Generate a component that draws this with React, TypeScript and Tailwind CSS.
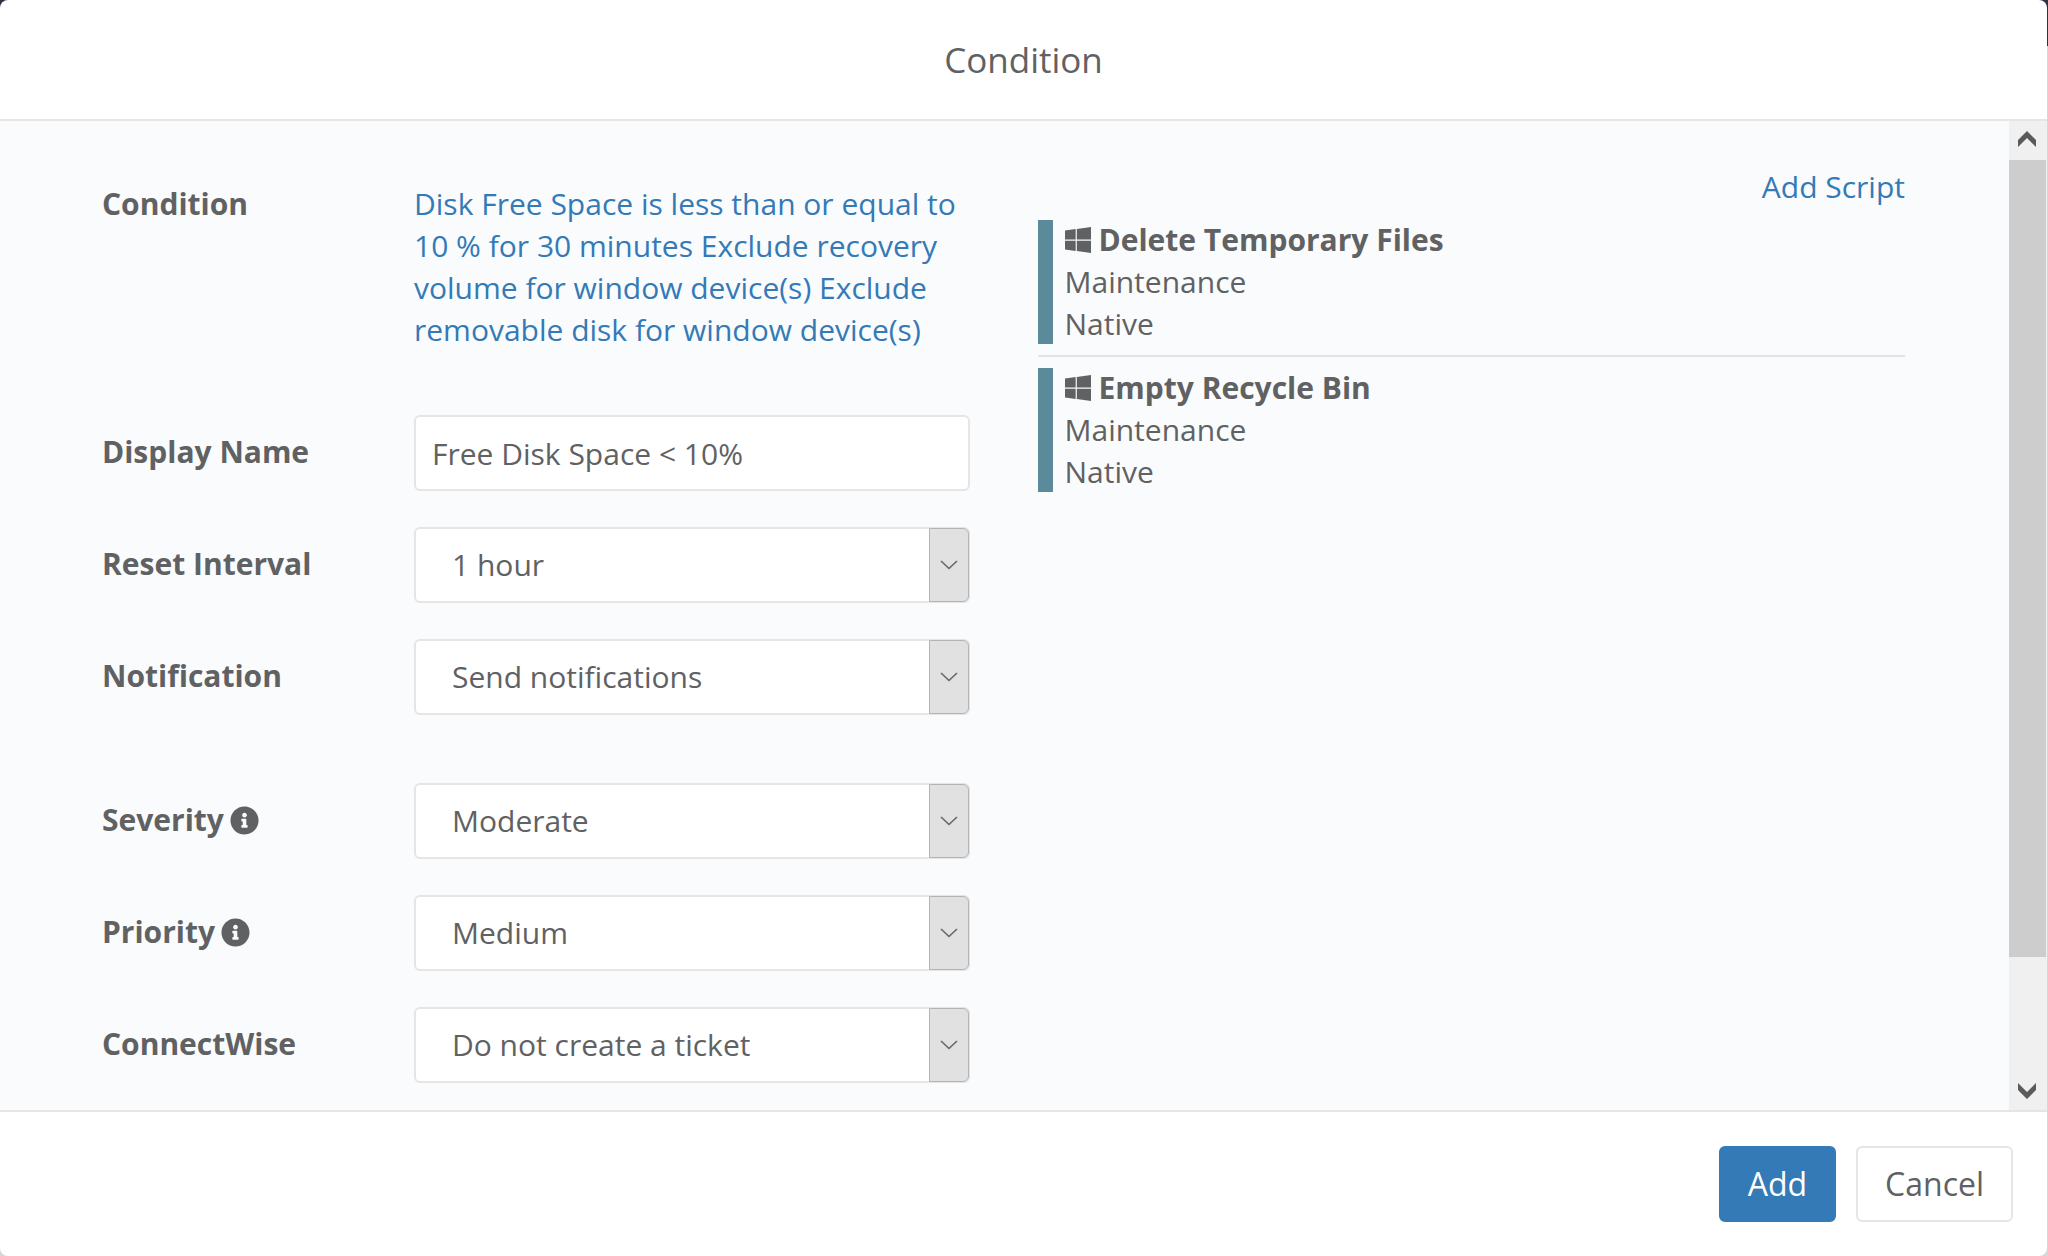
import { useState } from "react";
import { FaInfoCircle, FaWindows } from "react-icons/fa";

const scripts = [
    { name: "Delete Temporary Files", category: "Maintenance", type: "Native" },
    { name: "Empty Recycle Bin", category: "Maintenance", type: "Native" },
];

type SelectRowProps = {
    id: string;
    label: string;
    options: string[];
    info?: boolean;
};

function SelectRow({ id, label, options, info }: SelectRowProps) {
    const [value, setValue] = useState(options[0]);

    return (
        <div className="grid grid-cols-[312px_minmax(0,1fr)]">
            <label htmlFor={id} className="flex items-center gap-1.5 self-start pt-4 font-bold">
                {label}
                {info && <FaInfoCircle className="size-[29px]" />}
            </label>
            <div className="relative">
                <select
                    id={id}
                    value={value}
                    onChange={(e) => setValue(e.target.value)}
                    className="block h-[76px] w-full appearance-none rounded-md border-2 border-[#e5e5e5] bg-white pl-9 pr-12"
                >
                    {options.map((option) => (
                        <option key={option}>{option}</option>
                    ))}
                </select>
                <span className="pointer-events-none absolute inset-y-px right-px flex w-10 items-center justify-center rounded-r-md border border-[#b4b4b4] bg-[#e1e1e1]">
                    <svg viewBox="0 0 18 10" className="h-[10px] w-[18px]" fill="none" stroke="#666" strokeWidth="1.6">
                        <path d="M1 1l8 7.5L17 1" />
                    </svg>
                </span>
            </div>
        </div>
    );
}

function Scrollbar() {
    return (
        <div className="flex w-[38px] shrink-0 flex-col bg-[#f0f0f0]" aria-hidden="true">
            <div className="flex h-[39px] shrink-0 items-center justify-center pb-1 pr-0.5">
                <svg viewBox="0 0 18 16" className="h-4 w-[18px]" fill="#5b5b5b">
                    <path d="M9 0l9 9v7l-9-9-9 9V9z" />
                </svg>
            </div>
            <div className="flex flex-1 flex-col">
                <div className="mr-px h-[87.5%] bg-[#cdcdcd]" />
            </div>
            <div className="flex h-[39px] shrink-0 items-center justify-center pr-0.5">
                <svg viewBox="0 0 18 16" className="h-4 w-[18px]" fill="#5b5b5b">
                    <path d="M9 16L0 7V0l9 9 9-9v7z" />
                </svg>
            </div>
        </div>
    );
}

export default function App() {
    const [displayName, setDisplayName] = useState("Free Disk Space < 10%");

    return (
        <div className="h-screen bg-[linear-gradient(#2e3044_46px,#d6d7da_46px)] pr-px font-['Open_Sans','Noto_Sans',sans-serif] text-[30px] leading-[42px] text-[#606163]">
            <div role="dialog" aria-labelledby="modal-title" className="flex h-full flex-col overflow-hidden rounded-lg bg-white">
                <header className="border-b-2 border-[#e5e5e5] py-[38px] text-center">
                    <h1 id="modal-title" className="text-[35px] leading-[43px]">
                        Condition
                    </h1>
                </header>

                <div className="flex min-h-0 flex-1 bg-[#fafbfd]">
                    <div className="grid min-w-0 flex-1 grid-cols-2 gap-[68px] overflow-hidden pl-[102px] pr-[104px]">
                        <form className="pt-[62px]">
                            <div className="grid grid-cols-[312px_minmax(0,1fr)]">
                                <span className="font-bold">Condition</span>
                                <a href="#" className="text-[#337ab7]">
                                    Disk Free Space is less than or equal to 10 % for 30 minutes Exclude recovery volume for window device(s) Exclude
                                    removable disk for window device(s)
                                </a>
                            </div>
                            <div className="mt-16 flex flex-col gap-9">
                                <div className="grid grid-cols-[312px_minmax(0,1fr)]">
                                    <label htmlFor="display-name" className="self-start pt-4 font-bold">
                                        Display Name
                                    </label>
                                    <input
                                        id="display-name"
                                        type="text"
                                        value={displayName}
                                        onChange={(e) => setDisplayName(e.target.value)}
                                        className="h-[76px] w-full rounded-md border-2 border-[#e5e5e5] bg-white px-4"
                                    />
                                </div>
                                <SelectRow id="reset-interval" label="Reset Interval" options={["1 hour"]} />
                                <SelectRow id="notification" label="Notification" options={["Send notifications"]} />
                            </div>
                            <div className="mt-[68px] flex flex-col gap-9">
                                <SelectRow id="severity" label="Severity" options={["Moderate"]} info />
                                <SelectRow id="priority" label="Priority" options={["Medium"]} info />
                                <SelectRow id="connectwise" label="ConnectWise" options={["Do not create a ticket"]} />
                            </div>
                        </form>

                        <section className="pt-[45px]">
                            <div className="mb-[11px] text-right">
                                <a href="#" className="text-[#337ab7]">
                                    Add Script
                                </a>
                            </div>
                            <ul className="divide-y-2 divide-[#e2e5e8]">
                                {scripts.map((script) => (
                                    <li key={script.name} className="flex gap-3 py-[10px] first:pt-0">
                                        <div className="my-px w-[15px] shrink-0 bg-[#5b8a9b]" />
                                        <div>
                                            <h2 className="flex items-center gap-2 font-bold">
                                                <FaWindows className="h-[30px] w-[26px]" />
                                                {script.name}
                                            </h2>
                                            <p>{script.category}</p>
                                            <p>{script.type}</p>
                                        </div>
                                    </li>
                                ))}
                            </ul>
                        </section>
                    </div>
                    <Scrollbar />
                </div>

                <footer className="flex justify-end gap-5 border-t-2 border-[#e5e5e5] px-[34px] py-[34px] text-[32px]">
                    <button type="button" className="h-[76px] rounded-md border-2 border-[#337ab7] bg-[#337ab7] px-[27px] text-white">
                        Add
                    </button>
                    <button type="button" className="h-[76px] rounded-md border-2 border-[#e5e5e5] bg-white px-[27px]">
                        Cancel
                    </button>
                </footer>
            </div>
        </div>
    );
}
